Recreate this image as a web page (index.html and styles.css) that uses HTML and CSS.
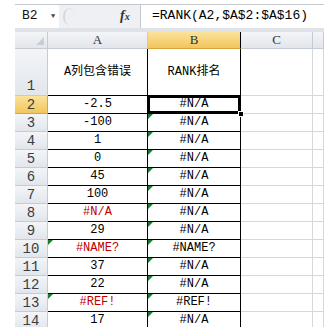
FILE: index.html
```html
<!DOCTYPE html>
<html lang="zh">
<head>
  <meta charset="UTF-8" />
  <title>RANK</title>
  <link rel="stylesheet" href="styles.css">
</head>
<body>
  <div class="topline"></div>

  <!-- formula bar -->
  <div class="fbar">
    <div class="namebox">B2</div>
    <div class="drop">&#9660;</div>
    <div class="splitter"></div>
    <div class="fx">f<span>x</span></div>
    <div class="formula">=RANK(A2,$A$2:$A$16)</div>
  </div>
  <div class="gap"></div>

  <!-- sheet -->
  <div class="sheet">
    <div class="corner"><span></span></div>
    <div class="colhead">A</div>
    <div class="colhead sel">B</div>
    <div class="colhead">C</div>
    <div class="colhead"></div>

    <div class="rowhead tall">1</div>
    <div class="cell a tall">A列包含错误</div>
    <div class="cell b tall">RANK排名</div>
    <div class="cell c tall"></div>
    <div class="cell d tall"></div>

    <div class="rowhead sel">2</div>
    <div class="cell a">-2.5</div>
    <div class="cell b active">#N/A<i class="handle"></i></div>
    <div class="cell c"></div>
    <div class="cell d"></div>

    <div class="rowhead">3</div>
    <div class="cell a">-100</div>
    <div class="cell b tri">#N/A</div>
    <div class="cell c"></div>
    <div class="cell d"></div>

    <div class="rowhead">4</div>
    <div class="cell a">1</div>
    <div class="cell b tri">#N/A</div>
    <div class="cell c"></div>
    <div class="cell d"></div>

    <div class="rowhead">5</div>
    <div class="cell a">0</div>
    <div class="cell b tri">#N/A</div>
    <div class="cell c"></div>
    <div class="cell d"></div>

    <div class="rowhead">6</div>
    <div class="cell a">45</div>
    <div class="cell b tri">#N/A</div>
    <div class="cell c"></div>
    <div class="cell d"></div>

    <div class="rowhead">7</div>
    <div class="cell a">100</div>
    <div class="cell b tri">#N/A</div>
    <div class="cell c"></div>
    <div class="cell d"></div>

    <div class="rowhead">8</div>
    <div class="cell a err">#N/A</div>
    <div class="cell b tri">#N/A</div>
    <div class="cell c"></div>
    <div class="cell d"></div>

    <div class="rowhead">9</div>
    <div class="cell a">29</div>
    <div class="cell b tri">#N/A</div>
    <div class="cell c"></div>
    <div class="cell d"></div>

    <div class="rowhead">10</div>
    <div class="cell a err tri">#NAME?</div>
    <div class="cell b tri">#NAME?</div>
    <div class="cell c"></div>
    <div class="cell d"></div>

    <div class="rowhead">11</div>
    <div class="cell a">37</div>
    <div class="cell b tri">#N/A</div>
    <div class="cell c"></div>
    <div class="cell d"></div>

    <div class="rowhead">12</div>
    <div class="cell a">22</div>
    <div class="cell b tri">#N/A</div>
    <div class="cell c"></div>
    <div class="cell d"></div>

    <div class="rowhead">13</div>
    <div class="cell a err tri">#REF!</div>
    <div class="cell b tri">#REF!</div>
    <div class="cell c"></div>
    <div class="cell d"></div>

    <div class="rowhead">14</div>
    <div class="cell a">17</div>
    <div class="cell b tri">#N/A</div>
    <div class="cell c"></div>
    <div class="cell d"></div>
  </div>
</body>
</html>
```

FILE: styles.css
```css
* {
  box-sizing: border-box;
}

body {
  margin: 0;
  width: 324px;
  height: 327px;
  overflow: hidden;
  background: #fff;
  font-family: "Liberation Mono", "Noto Sans CJK SC", monospace;
  color: #000;
}

.topline {
  height: 5px;
  margin-left: 15px;
  border-bottom: 1px solid #c3c8cf;
}

/* formula bar */
.fbar {
  display: flex;
  height: 23px;
  margin-left: 15px;
  background: #eef0f3;
  align-items: stretch;
}

.namebox {
  width: 32px;
  background: #fff;
  font-size: 13px;
  line-height: 22px;
  padding-left: 7px;
  color: #111;
}

.drop {
  width: 12px;
  font-size: 7px;
  line-height: 23px;
  color: #444;
  text-align: center;
  background: #fff;
}

.splitter {
  width: 12px;
  margin: 3px 0 3px 4px;
  border-radius: 50%;
  border-left: 2px solid #d5d9de;
  border-top: 1px solid #e0e3e7;
}

.fx {
  margin-left: auto;
  width: 20px;
  font-family: "Liberation Serif", serif;
  font-style: italic;
  font-weight: bold;
  font-size: 14px;
  line-height: 22px;
  color: #333;
}

.fx span {
  font-size: 10px;
}

.formula {
  width: 184px;
  background: #fff;
  border-left: 1px solid #c3c8cf;
  font-size: 13px;
  line-height: 22px;
  padding-left: 11px;
  white-space: nowrap;
  overflow: hidden;
}

.gap {
  height: 4px;
  margin-left: 15px;
  background: #dfe3e8;
}

/* sheet grid */
.sheet {
  display: grid;
  margin-left: 15px;
  grid-template-columns: 33px 100px 93px 72px 11px;
  grid-template-rows: 17px 47px repeat(13, 18px);
}

.corner,
.colhead,
.rowhead {
  background: linear-gradient(#f3f5f8, #e2e6eb);
  color: #333;
  border-right: 1px solid #c5cbd3;
  border-bottom: 1px solid #c5cbd3;
}

.corner {
  position: relative;
}

.corner span {
  position: absolute;
  right: 3px;
  bottom: 3px;
  border-left: 8px solid transparent;
  border-bottom: 8px solid #c9ced5;
}

.colhead {
  font-family: "Liberation Serif", serif;
  font-size: 13px;
  line-height: 16px;
  text-align: center;
}

.colhead.sel {
  background: linear-gradient(#fbe39b, #f2c55d);
  border-bottom: 1px solid #d9a43b;
  border-right-color: #000;
}

.rowhead {
  font-size: 14px;
  line-height: 18px;
  text-align: center;
  color: #3a3d42;
}

.rowhead.tall {
  display: flex;
  align-items: flex-end;
  justify-content: center;
  line-height: 18px;
}

.rowhead.sel {
  background: linear-gradient(#fbe39b, #f2c55d);
  border-bottom-color: #d9a43b;
  border-right-color: #d9a43b;
}

.cell {
  position: relative;
  font-size: 12px;
  line-height: 17px;
  text-align: center;
  white-space: nowrap;
  border-bottom: 1px solid #d4d7db;
  border-right: 1px solid #d4d7db;
}

.cell.a,
.cell.b {
  border-bottom-color: #000;
  border-right-color: #000;
}

.cell.tall {
  line-height: 46px;
}

.err {
  color: #c00000;
}

/* error indicator */
.tri::before {
  content: "";
  position: absolute;
  left: 0;
  top: 0;
  border-top: 5px solid #1e7a2e;
  border-right: 5px solid transparent;
}

.active {
  box-shadow: inset 0 0 0 2px #000;
  border-left: 1px solid #000;
  margin-left: -1px;
  margin-top: -1px;
  border-top: 1px solid #000;
}

.handle {
  position: absolute;
  right: -4px;
  bottom: -4px;
  width: 6px;
  height: 6px;
  background: #000;
  border: 1px solid #fff;
  z-index: 2;
}
```
